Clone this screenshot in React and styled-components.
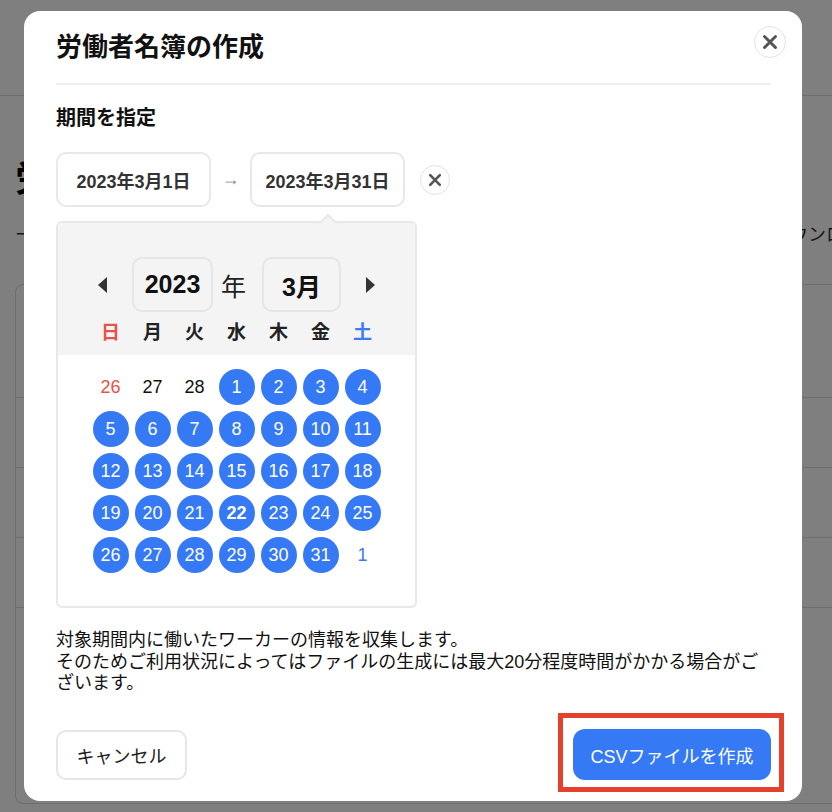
import styled, { createGlobalStyle } from "styled-components";

const GlobalStyle = createGlobalStyle`
  * { box-sizing: border-box; }
  html, body { margin: 0; padding: 0; }
  body {
    font-family: "Liberation Sans", "Noto Sans CJK JP", sans-serif;
    color: #222;
    background: #fff;
  }
`;

const weekdays = ["日", "月", "火", "水", "木", "金", "土"];

const days = [
  { n: 26, kind: "prevSun" },
  { n: 27, kind: "prev" },
  { n: 28, kind: "prev" },
  ...Array.from({ length: 31 }, (_, i) => ({ n: i + 1, kind: i + 1 === 22 ? "today" : "range" })),
  { n: 1, kind: "next" },
];

const App = () => {
  return (
    <>
      <GlobalStyle />
      <Page>
        <PageHeader />
        <PageMain>
          <PageTitle>労働者名簿</PageTitle>
          <PageSub>
            <span>ー 対象期間を指定して作成</span>
            <span>CSVダウンロード</span>
          </PageSub>
          <PageCard>
            <PageRow />
            <PageRow />
            <PageRow />
            <PageRow />
          </PageCard>
        </PageMain>
        <Backdrop />
        <Modal>
          <CloseButton aria-label="閉じる">
            <XIcon size={16} />
          </CloseButton>
          <Title>労働者名簿の作成</Title>
          <Divider />
          <Label>期間を指定</Label>
          <DateRow>
            <DateBox>2023年3月1日</DateBox>
            <RangeArrow>→</RangeArrow>
            <DateBox>2023年3月31日</DateBox>
            <ClearButton aria-label="クリア">
              <XIcon size={14} />
            </ClearButton>
          </DateRow>
          <Calendar>
            <CalendarHead>
              <NavRow>
                <NavArrow aria-label="前の月">
                  <svg width="10" height="16" viewBox="0 0 10 16">
                    <path d="M9 0 L0 8 L9 16 Z" fill="#333" />
                  </svg>
                </NavArrow>
                <Select $w={81}>2023</Select>
                <YearLabel>年</YearLabel>
                <Select $w={79}>3月</Select>
                <NavArrow aria-label="次の月">
                  <svg width="10" height="16" viewBox="0 0 10 16">
                    <path d="M1 0 L10 8 L1 16 Z" fill="#333" />
                  </svg>
                </NavArrow>
              </NavRow>
              <Grid>
                {weekdays.map((w, i) => (
                  <Weekday key={w} $i={i}>
                    {w}
                  </Weekday>
                ))}
              </Grid>
            </CalendarHead>
            <DaysBody>
              <Grid $rows>
                {days.map((d, i) => (
                  <Day key={i} $kind={d.kind}>
                    {d.n}
                  </Day>
                ))}
              </Grid>
            </DaysBody>
          </Calendar>
          <Note>
            対象期間内に働いたワーカーの情報を収集します。
            <br />
            そのためご利用状況によってはファイルの生成には最大20分程度時間がかかる場合がございます。
          </Note>
          <Footer>
            <CancelButton>キャンセル</CancelButton>
            <Highlight>
              <PrimaryButton>CSVファイルを作成</PrimaryButton>
            </Highlight>
          </Footer>
        </Modal>
      </Page>
    </>
  );
};

const XIcon = ({ size }) => (
  <svg width={size} height={size} viewBox="0 0 16 16">
    <path d="M2.5 2.5 L13.5 13.5 M13.5 2.5 L2.5 13.5" stroke="#555" strokeWidth="3" strokeLinecap="round" />
  </svg>
);

const Page = styled.div`
  position: relative;
  width: 100%;
  height: 812px;
  overflow: hidden;
  background: #fff;
`;

const PageHeader = styled.div`
  height: 96px;
  border-bottom: 1px solid #ddd;
`;

const PageMain = styled.div`
  padding: 62px 0 0 15px;
`;

const PageTitle = styled.div`
  font-size: 36px;
  font-weight: 700;
  line-height: 44px;
  color: #000;
`;

const PageSub = styled.div`
  display: flex;
  justify-content: space-between;
  margin-top: 18px;
  margin-right: -48px;
  font-size: 18px;
  color: #333;
`;

const PageCard = styled.div`
  margin-top: 38px;
  margin-right: -40px;
  border: 1px solid #ddd;
  border-radius: 8px;
  height: 520px;
  padding-top: 112px;
`;

const PageRow = styled.div`
  height: 70px;
  border-top: 1px solid #ddd;
`;

const Backdrop = styled.div`
  position: absolute;
  inset: 0;
  background: rgba(0, 0, 0, 0.5);
`;

const Modal = styled.div`
  position: absolute;
  left: 24px;
  top: 11px;
  width: 778px;
  height: 790px;
  background: #fff;
  border-radius: 16px;
  padding: 20px 31px 21px 32px;
  display: flex;
  flex-direction: column;
`;

const CloseButton = styled.button`
  position: absolute;
  top: 15px;
  right: 16px;
  width: 32px;
  height: 32px;
  border-radius: 50%;
  border: 1px solid #e3e3e3;
  background: #fff;
  display: flex;
  align-items: center;
  justify-content: center;
  padding: 0;
`;

const Title = styled.h2`
  margin: 0;
  font-size: 26px;
  line-height: 32px;
  font-weight: 700;
  color: #111;
`;

const Divider = styled.div`
  height: 2px;
  background: #eeeeee;
  margin: 20px 0 20px;
`;

const Label = styled.div`
  font-size: 20px;
  line-height: 26px;
  font-weight: 700;
  color: #111;
`;

const DateRow = styled.div`
  display: flex;
  align-items: center;
  margin-top: 21px;
`;

const DateBox = styled.div`
  width: 155px;
  height: 55px;
  border: 2px solid #e8e8e8;
  border-radius: 10px;
  display: flex;
  align-items: center;
  justify-content: center;
  font-size: 18px;
  font-weight: 700;
  color: #333;
`;

const RangeArrow = styled.span`
  width: 39px;
  text-align: center;
  font-size: 18px;
  color: #888;
`;

const ClearButton = styled.button`
  margin-left: 15px;
  width: 30px;
  height: 30px;
  border-radius: 50%;
  border: 1px solid #e3e3e3;
  background: #fff;
  display: flex;
  align-items: center;
  justify-content: center;
  padding: 0;
`;

const Calendar = styled.div`
  margin-top: 14px;
  width: 361px;
  border: 2px solid #e8e8e8;
  border-radius: 6px;
  position: relative;

  /* caret pointing at the end date field */
  &::before {
    content: "";
    position: absolute;
    top: -7px;
    left: 264px;
    width: 10px;
    height: 10px;
    background: #f4f4f4;
    border-left: 2px solid #e8e8e8;
    border-top: 2px solid #e8e8e8;
    transform: rotate(45deg);
  }
`;

const CalendarHead = styled.div`
  background: #f4f4f4;
  border-radius: 4px 4px 0 0;
  padding: 34px 0 10px;
`;

const NavRow = styled.div`
  display: flex;
  align-items: center;
  justify-content: center;
  margin-bottom: 9px;
`;

const NavArrow = styled.button`
  width: 24px;
  height: 24px;
  border: none;
  background: none;
  padding: 0;
  display: flex;
  align-items: center;
  justify-content: center;
  margin: 0 17px;
`;

const Select = styled.div`
  width: ${(p) => p.$w}px;
  height: 55px;
  border: 2px solid #e6e6e6;
  border-radius: 10px;
  background: #f4f4f4;
  display: flex;
  align-items: center;
  justify-content: center;
  font-size: 25px;
  font-weight: 700;
  color: #111;
`;

const YearLabel = styled.span`
  width: 49px;
  padding-right: 8px;
  text-align: center;
  font-size: 25px;
  color: #222;
`;

const Grid = styled.div`
  display: grid;
  grid-template-columns: repeat(7, 36px);
  column-gap: 6px;
  row-gap: ${(p) => (p.$rows ? 6 : 0)}px;
  justify-content: center;
`;

const Weekday = styled.div`
  text-align: center;
  font-size: 19px;
  line-height: 24px;
  font-weight: 700;
  color: ${(p) => (p.$i === 0 ? "#e8504a" : p.$i === 6 ? "#3a7bf6" : "#222")};
`;

const DaysBody = styled.div`
  padding: 14px 0 33px;
`;

const dayColor = {
  prevSun: "#e8504a",
  prev: "#111",
  next: "#3a7bf6",
  range: "#fff",
  today: "#fff",
};

const Day = styled.div`
  width: 36px;
  height: 36px;
  border-radius: 50%;
  display: flex;
  align-items: center;
  justify-content: center;
  font-size: 18px;
  font-weight: ${(p) => (p.$kind === "today" ? 700 : 400)};
  color: ${(p) => dayColor[p.$kind]};
  background: ${(p) => (p.$kind === "range" || p.$kind === "today" ? "#3679f5" : "transparent")};
`;

const Note = styled.p`
  margin: 22px 0 0;
  font-size: 18px;
  line-height: 21.5px;
  color: #111;
`;

const Footer = styled.div`
  margin-top: auto;
  display: flex;
  justify-content: space-between;
  align-items: flex-end;
`;

const CancelButton = styled.button`
  width: 131px;
  height: 50px;
  border: 2px solid #e6e6e6;
  border-radius: 10px;
  background: #fff;
  font-family: inherit;
  font-size: 18px;
  color: #222;
`;

const Highlight = styled.div`
  position: relative;
  &::after {
    content: "";
    position: absolute;
    top: -16px;
    bottom: -12px;
    left: -15px;
    right: -13px;
    border: 5px solid #e5402b;
    pointer-events: none;
  }
`;

const PrimaryButton = styled.button`
  width: 198px;
  height: 51px;
  border: none;
  border-radius: 12px;
  background: #3679f5;
  font-family: inherit;
  font-size: 18px;
  color: #fff;
`;

export default App;
